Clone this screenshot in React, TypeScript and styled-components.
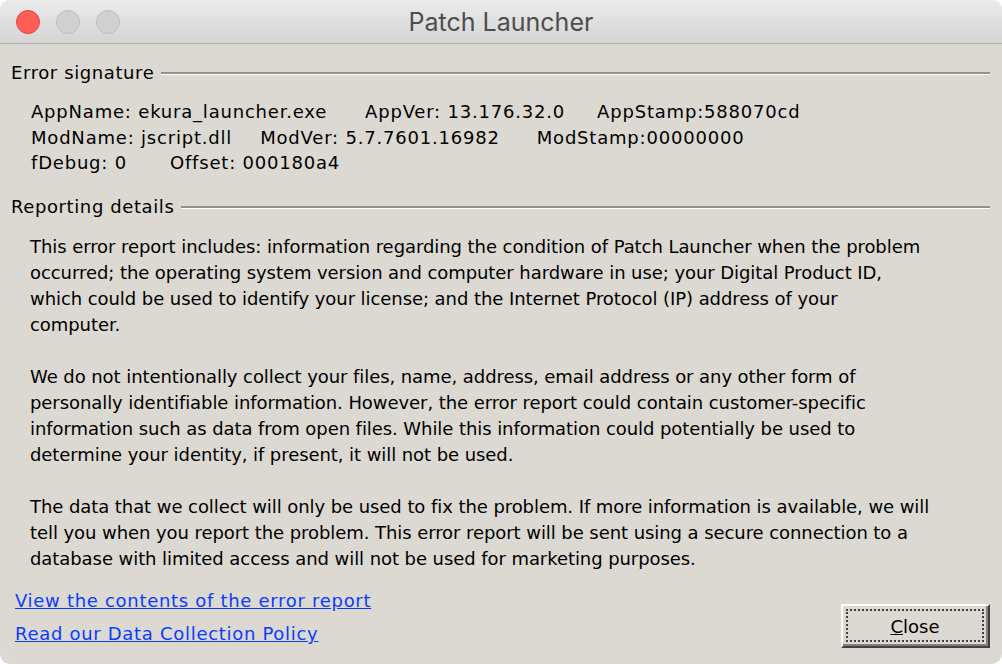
import React from 'react'
import styled, { createGlobalStyle } from 'styled-components'

const GlobalStyle = createGlobalStyle`
    html, body {
        margin: 0;
        padding: 0;
        background: #ffffff;
    }
    body {
        font-family: 'DejaVu Sans', Tahoma, sans-serif;
    }
`

const Window = styled.div`
    width: 1002px;
    height: 664px;
    border-radius: 10px;
    overflow: hidden;
    background: #dcd9d2;
    display: flex;
    flex-direction: column;
`

const TitleBar = styled.div`
    height: 44px;
    flex: 0 0 44px;
    box-sizing: border-box;
    border-bottom: 1px solid #b1b1b1;
    background: linear-gradient(#ebebeb, #d4d4d4);
    display: flex;
    align-items: center;
    position: relative;
`

const Lights = styled.div`
    display: flex;
    gap: 16px;
    padding-left: 16px;
`

const Light = styled.span<{ $color: string; $edge: string }>`
    width: 24px;
    height: 24px;
    border-radius: 50%;
    box-sizing: border-box;
    background: ${p => p.$color};
    border: 1px solid ${p => p.$edge};
`

const Title = styled.div`
    position: absolute;
    left: 0;
    right: 0;
    text-align: center;
    font-family: Inter, 'Liberation Sans', sans-serif;
    font-size: 25px;
    color: #4d4d4d;
`

const Body = styled.div`
    flex: 1;
    display: flex;
    flex-direction: column;
    padding: 18px 12px 0 11px;
    font-size: 18px;
    color: #000;
`

const GroupHeader = styled.div<{ $top?: number }>`
    display: flex;
    align-items: center;
    gap: 7px;
    height: 22px;
    line-height: 22px;
    margin-top: ${p => p.$top ?? 0}px;
    letter-spacing: 0.6px;
`

const Rule = styled.div`
    flex: 1;
    height: 2px;
    background: #929292;
    border-bottom: 1px solid #ffffff;
    margin-top: 1px;
`

const InfoBlock = styled.div`
    padding: 15px 0 0 20px;
    line-height: 25.5px;
    letter-spacing: 0.8px;
`

const InfoRow = styled.div`
    white-space: nowrap;
`

const Field = styled.span<{ $gap?: number }>`
    margin-right: ${p => p.$gap ?? 38}px;
`

const Details = styled.div`
    padding: 16px 0 0 19px;
    line-height: 26px;
    letter-spacing: -0.07px;
`

const Para = styled.p`
    margin: 0 0 26px 0;
    white-space: nowrap;

    &:last-child {
        margin-bottom: 0;
    }
`

const Footer = styled.div`
    display: flex;
    justify-content: space-between;
    align-items: flex-end;
    padding: 0 0 16px 4px;
    margin-top: auto;
`

const Links = styled.div`
    display: flex;
    flex-direction: column;
    gap: 9px;
    line-height: 24px;
    margin-bottom: 2px;
    letter-spacing: 0.7px;
`

const Link = styled.a`
    color: #0a3cff;
    text-decoration: underline;
    cursor: pointer;
`

const Button = styled.button`
    width: 149px;
    height: 44px;
    padding: 3px;
    box-sizing: border-box;
    background: #dcd9d2;
    border: none;
    border-top: 2px solid #ffffff;
    border-left: 2px solid #ffffff;
    border-right: 2px solid #404040;
    border-bottom: 2px solid #404040;
    box-shadow: inset -2px -2px 0 #808080;
    font-family: 'DejaVu Sans', Tahoma, sans-serif;
    font-size: 18px;
    color: #000;
    display: flex;
`

const Focus = styled.span`
    flex: 1;
    border: 2px dotted #404040;
    display: flex;
    align-items: center;
    justify-content: center;
    padding-top: 2px;
    margin-right: 1px;
    margin-bottom: 1px;
`

const Mnemonic = styled.span`
    text-decoration: underline;
`

export default function App() {
    return (
        <>
            <GlobalStyle />
            <Window>
                <TitleBar>
                    <Lights>
                        <Light $color="#fe5f57" $edge="#e0443e" />
                        <Light $color="#d0d0d0" $edge="#bdbdbd" />
                        <Light $color="#d0d0d0" $edge="#bdbdbd" />
                    </Lights>
                    <Title>Patch Launcher</Title>
                </TitleBar>
                <Body>
                    <GroupHeader>
                        <span>Error signature</span>
                        <Rule />
                    </GroupHeader>
                    <InfoBlock>
                        <InfoRow>
                            <Field $gap={38}>AppName: ekura_launcher.exe</Field>
                            <Field $gap={32}>AppVer: 13.176.32.0</Field>
                            <Field $gap={0}>AppStamp:588070cd</Field>
                        </InfoRow>
                        <InfoRow>
                            <Field $gap={28}>ModName: jscript.dll</Field>
                            <Field $gap={37}>ModVer: 5.7.7601.16982</Field>
                            <Field $gap={0}>ModStamp:00000000</Field>
                        </InfoRow>
                        <InfoRow>
                            <Field $gap={43}>fDebug: 0</Field>
                            <Field $gap={0}>Offset: 000180a4</Field>
                        </InfoRow>
                    </InfoBlock>
                    <GroupHeader $top={20}>
                        <span>Reporting details</span>
                        <Rule />
                    </GroupHeader>
                    <Details>
                        <Para>
                            This error report includes: information regarding the condition of Patch Launcher when the problem
                            <br />
                            occurred; the operating system version and computer hardware in use; your Digital Product ID,
                            <br />
                            which could be used to identify your license; and the Internet Protocol (IP) address of your
                            <br />
                            computer.
                        </Para>
                        <Para>
                            We do not intentionally collect your files, name, address, email address or any other form of
                            <br />
                            personally identifiable information. However, the error report could contain customer-specific
                            <br />
                            information such as data from open files. While this information could potentially be used to
                            <br />
                            determine your identity, if present, it will not be used.
                        </Para>
                        <Para>
                            The data that we collect will only be used to fix the problem. If more information is available, we will
                            <br />
                            tell you when you report the problem. This error report will be sent using a secure connection to a
                            <br />
                            database with limited access and will not be used for marketing purposes.
                        </Para>
                    </Details>
                    <Footer>
                        <Links>
                            <Link>View the contents of the error report</Link>
                            <Link>Read our Data Collection Policy</Link>
                        </Links>
                        <Button>
                            <Focus>
                                <Mnemonic>C</Mnemonic>lose
                            </Focus>
                        </Button>
                    </Footer>
                </Body>
            </Window>
        </>
    )
}
